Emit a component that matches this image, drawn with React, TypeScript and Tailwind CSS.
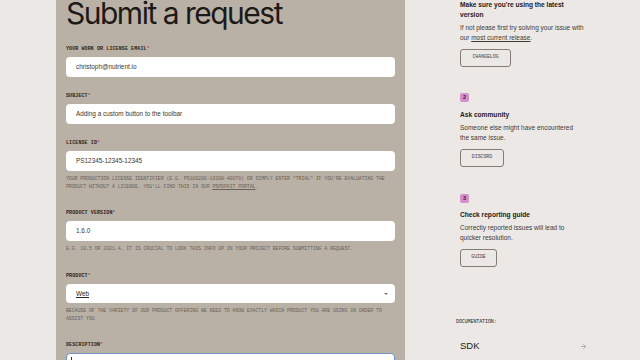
import { ArrowRight } from "lucide-react";

const mono = { fontFamily: '"Liberation Mono", "DejaVu Sans Mono", monospace' };
const sans = { fontFamily: '"Liberation Sans", Arial, sans-serif' };

function FieldLabel({ children, className = "" }: { children: string; className?: string }) {
  return (
    <div
      className={`h-[6px] text-[5px] font-bold uppercase leading-[6px] tracking-[0.02em] text-[#2a2520] ${className}`}
      style={mono}
    >
      {children}
      <span className="text-[#c0463a]">*</span>
    </div>
  );
}

function Help({ children, className = "" }: { children: React.ReactNode; className?: string }) {
  return (
    <div
      className={`text-[5px] uppercase leading-[8px] tracking-[-0.13px] text-[#6c645b] ${className}`}
      style={mono}
    >
      {children}
    </div>
  );
}

function TextInput({ value }: { value: string }) {
  return (
    <div
      className="mt-[5px] flex h-[20px] items-center rounded-[4px] bg-white px-[10px] text-[6.4px] text-[#3b3631]"
      style={sans}
    >
      {value}
    </div>
  );
}

function Step({ n }: { n: string }) {
  return (
    <div
      className="flex h-[9px] w-[9px] items-center justify-center rounded-[2px] bg-[#d690c9] text-[5.5px] font-bold text-[#3a2036]"
      style={sans}
    >
      {n}
    </div>
  );
}

function OutlineButton({ label, width }: { label: string; width: string }) {
  return (
    <div
      className={`flex h-[18px] ${width} items-center justify-center rounded-[3px] border border-[#857d75] text-[5px] tracking-[-0.1px] text-[#4a443e]`}
      style={mono}
    >
      {label}
    </div>
  );
}

function Heading({ children, className = "" }: { children: React.ReactNode; className?: string }) {
  return (
    <div className={`text-[6.6px] font-bold leading-[10px] text-[#25201c] ${className}`} style={sans}>
      {children}
    </div>
  );
}

function Body({ children }: { children: React.ReactNode }) {
  return (
    <div className="mt-[3px] whitespace-nowrap text-[6.5px] leading-[10px] text-[#403a35]" style={sans}>
      {children}
    </div>
  );
}

export default function App() {
  return (
    <div
      className="flex h-[360px] w-[640px] overflow-hidden bg-[#ece8e5]"
      style={{ fontFamily: 'Inter, "Liberation Sans", sans-serif' }}
    >
      <div className="w-[56px] shrink-0" />
      <div className="h-full w-[349px] shrink-0 bg-[#bab1a6] px-[10px]">
        <h1 className="-mt-[2px] text-[30px] font-normal leading-none tracking-[-0.05em] text-[#1d1916]">
          Submit a request
        </h1>

        <FieldLabel className="mt-[18px]">Your work or license email</FieldLabel>
        <TextInput value="christoph@nutrient.io" />

        <FieldLabel className="mt-[16px]">Subject</FieldLabel>
        <TextInput value="Adding a custom button to the toolbar" />

        <FieldLabel className="mt-[16px]">License ID</FieldLabel>
        <TextInput value="PS12345-12345-12345" />
        <Help className="mt-[4px]">
          Your production license identifier (e.g. PS100200-10300-40070) or simply enter "trial" if
          you're evaluating the product without a license. You'll find this in our{" "}
          <span className="underline">PSPDFKit portal</span>.
        </Help>

        <FieldLabel className="mt-[19px]">Product version</FieldLabel>
        <TextInput value="1.6.0" />
        <Help className="mt-[4px]">
          E.g. 10.5 or 2021.4. It is crucial to look this info up in your project before submitting a
          request.
        </Help>

        <FieldLabel className="mt-[20px]">Product</FieldLabel>
        <div
          className="mt-[5px] flex h-[19px] items-center justify-between rounded-[4px] bg-white pl-[10px] pr-[7px] text-[6.4px] text-[#2a2520]"
          style={sans}
        >
          <span className="underline">Web</span>
          <span className="h-0 w-0 border-x-[2px] border-t-[2px] border-x-transparent border-t-[#777]" />
        </div>
        <Help className="mt-[4px]">
          Because of the variety of our product offering we need to know exactly which product you
          are using in order to assist you
        </Help>

        <FieldLabel className="mt-[19px]">Description</FieldLabel>
        <div className="mt-[5px] h-[20px] rounded-[4px] border border-[#6f94c4] bg-white px-[4px] pt-[3px]">
          <div className="h-[6px] w-px bg-[#333]" />
        </div>
      </div>

      <div className="flex w-[235px] flex-col pl-[55px] pr-[53px]">
        <Heading>
          Make sure you're using the latest
          <br />
          version
        </Heading>
        <Body>
          If not please first try solving your issue with
          <br />
          our <span className="underline">most current release</span>.
        </Body>
        <div className="mt-[6px]">
          <OutlineButton label="CHANGELOG" width="w-[51px]" />
        </div>

        <div className="mt-[26px]">
          <Step n="2" />
        </div>
        <Heading className="mt-[8px]">Ask community</Heading>
        <Body>
          Someone else might have encountered
          <br />
          the same issue.
        </Body>
        <div className="mt-[6px]">
          <OutlineButton label="DISCORD" width="w-[44px]" />
        </div>

        <div className="mt-[27px]">
          <Step n="3" />
        </div>
        <Heading className="mt-[7px]">Check reporting guide</Heading>
        <Body>
          Correctly reported issues will lead to
          <br />
          quicker resolution.
        </Body>
        <div className="mt-[6px]">
          <OutlineButton label="GUIDE" width="w-[37px]" />
        </div>

        <div
          className="-ml-[4px] mt-[52px] text-[5px] uppercase leading-[6px] tracking-[-0.1px] text-[#2a2520]"
          style={mono}
        >
          Documentation:
        </div>
        <div
          className="mt-[16px] flex items-center justify-between text-[9.5px] leading-[10px] text-[#1d1916]"
          style={sans}
        >
          <span>SDK</span>
          <ArrowRight className="h-[7px] w-[7px] text-[#888]" strokeWidth={2} />
        </div>
      </div>
    </div>
  );
}
